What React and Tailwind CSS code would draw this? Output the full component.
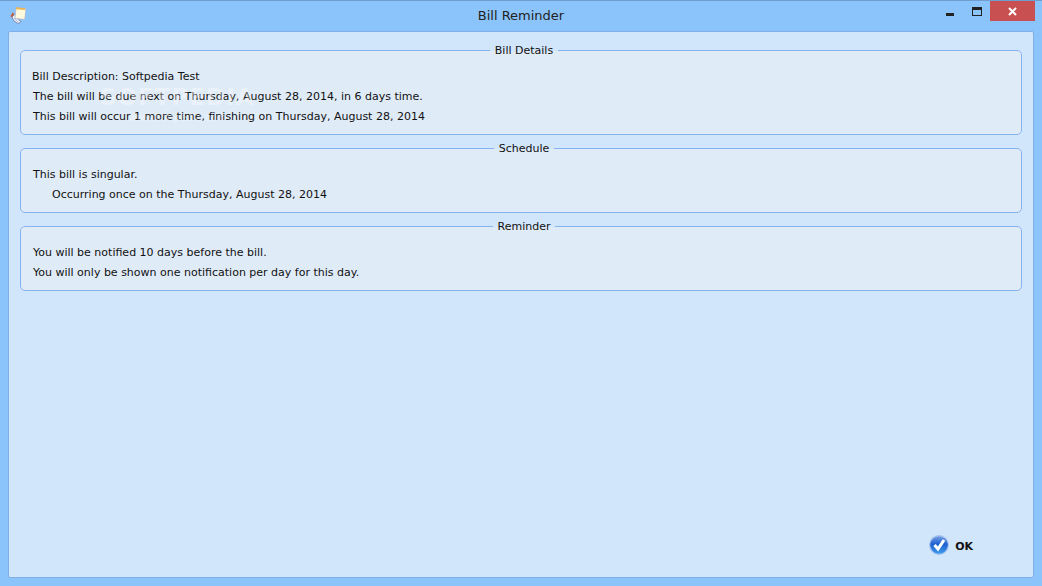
import React from 'react';

function Group({ title, children, className = '' }) {
  return (
    <fieldset className={`relative rounded-[5px] border border-[#85b3ec] bg-[#e0ebf8] pl-[12px] pt-[16px] pb-[8px] ${className}`}>
      <div className="absolute left-[6px] right-0 -top-[8px] flex justify-center">
        <span className="relative px-[5px] text-[11px] leading-[16px] text-[#111]">
          <span className="absolute inset-x-0 top-0 h-[8px] bg-[#d1e5fb]" />
          <span className="absolute inset-x-0 top-[8px] h-[8px] bg-[#e0ebf8]" />
          <span className="relative">{title}</span>
        </span>
      </div>
      {children}
    </fieldset>
  );
}

function Line({ children, className = '' }) {
  return <div className={`h-[20px] text-[11px] leading-[20px] text-[#111] whitespace-nowrap ${className}`}>{children}</div>;
}

function AppIcon() {
  return (
    <svg width="18" height="18" viewBox="0 0 18 18">
      <path d="M4 6 L1.5 10 L3 12 L6 11 Z" fill="#c4603f" />
      <path d="M3 11 L5 15 L9 17.5 L12 16 L6 8 Z" fill="#eef1f8" stroke="#6c78a6" strokeWidth="0.8" />
      <path d="M5 12 L9 16 M6.5 10.5 L10.5 15" stroke="#8d97bc" strokeWidth="0.6" />
      <rect x="6.5" y="2" width="10" height="11" rx="1" fill="#fdf9dc" stroke="#a9b4d4" strokeWidth="0.8" transform="rotate(6 11 7)" />
      <rect x="7" y="1.6" width="9" height="2" fill="#eeb552" transform="rotate(6 11 3)" />
    </svg>
  );
}

function OkIcon() {
  return (
    <svg width="20" height="20" viewBox="0 0 20 20" className="mb-[4px]">
      <defs>
        <linearGradient id="okBlue" x1="0" y1="0" x2="0" y2="1">
          <stop offset="0" stopColor="#7fa8e6" />
          <stop offset="0.45" stopColor="#1f5fd0" />
          <stop offset="1" stopColor="#3f9cee" />
        </linearGradient>
      </defs>
      <circle cx="10" cy="10" r="9.4" fill="url(#okBlue)" stroke="#a9c6ee" strokeWidth="1.2" />
      <path d="M5.5 10 L9 14 L15 5" fill="none" stroke="#ffffff" strokeWidth="3" />
    </svg>
  );
}

export default function App() {
  return (
    <div className="relative flex h-[586px] w-[1042px] flex-col overflow-hidden bg-[#8ac4fb] font-['DejaVu_Sans',sans-serif]">
      {/* title bar */}
      <div className="grid h-[31px] shrink-0 grid-cols-[1fr_auto_1fr] items-start border-t border-[#6f9fd0]">
        <div className="ml-[9px] mt-[5px] w-[18px]"><AppIcon /></div>
        <div className="pt-[6px] text-center text-[13px] leading-[18px] text-[#222]">Bill Reminder</div>
        <div className="flex items-start justify-end">
          <div className="mr-[18px] mt-[12px] h-[3px] w-[8px] bg-[#222]" />
          <div className="mr-[8px] mt-[6px] h-[9px] w-[10px] border border-t-[3px] border-[#222]" />
          <div className="mr-[7px] flex h-[20px] w-[45px] items-center justify-center bg-[#c85050]">
            <svg width="9" height="9" viewBox="0 0 9 9"><path d="M1 1 L8 8 M8 1 L1 8" stroke="#fff" strokeWidth="2" /></svg>
          </div>
        </div>
      </div>

      {/* client area */}
      <div className="mx-[8px] mb-[8px] flex min-h-0 flex-1 flex-col rounded-[2px] border border-[#80b0e6] bg-[#d1e5fb] px-[11px] pt-[18px]">
        <div className="flex flex-col gap-[13px]">
          <Group title="Bill Details" className="h-[85px]">
            <Line className="-ml-px">Bill Description: Softpedia Test</Line>
            <Line>The bill will be due next on Thursday, August 28, 2014, in 6 days time.</Line>
            <Line>This bill will occur 1 more time, finishing on Thursday, August 28, 2014</Line>
          </Group>
          <Group title="Schedule" className="h-[65px]">
            <Line>This bill is singular.</Line>
            <Line className="pl-[19px]">Occurring once on the Thursday, August 28, 2014</Line>
          </Group>
          <Group title="Reminder" className="h-[65px]">
            <Line>You will be notified 10 days before the bill.</Line>
            <Line>You will only be shown one notification per day for this day.</Line>
          </Group>
        </div>
        <div className="mt-auto flex justify-end pb-[18px] pr-[49px]">
          <div className="flex items-center gap-[6px]">
            <OkIcon />
            <span className="text-[11px] font-bold leading-[20px] text-[#111]">OK</span>
          </div>
        </div>
      </div>

      {/* watermark */}
      <div className="absolute left-[100px] top-[84px] flex flex-col items-center gap-[2px] text-white/35">
        <span className="text-[23px] font-bold leading-[26px] tracking-[1px]">SOFTPEDIA</span>
        <span className="text-[10px] leading-[12px]">www.softpedia.com</span>
      </div>
    </div>
  );
}
